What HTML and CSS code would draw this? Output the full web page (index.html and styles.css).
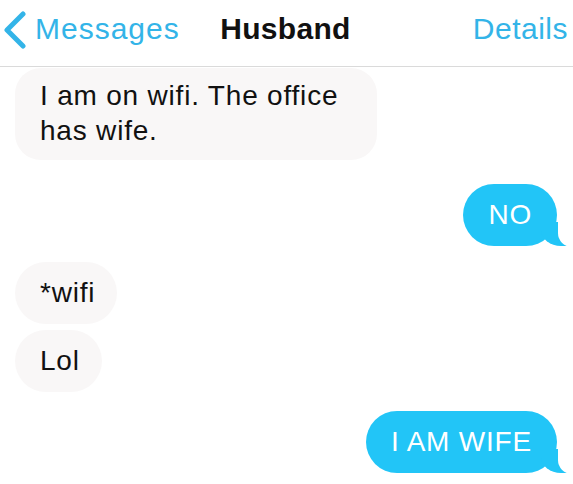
FILE: index.html
```html
<!DOCTYPE html>
<html lang="en">
<head>
  <meta charset="UTF-8" />
  <meta name="viewport" content="width=device-width, initial-scale=1.0"/>
  <title>Husband</title>
  <link rel="stylesheet" href="styles.css">
</head>
<body>
  <header class="nav">
    <a class="nav-back" href="#">
      <svg class="chevron" width="24" height="38" viewBox="0 0 24 38"><path d="M20 3 L4 19 L20 35"/></svg>
      <span>Messages</span>
    </a>
    <h1 class="nav-title">Husband</h1>
    <a class="nav-details" href="#">Details</a>
  </header>

  <main class="thread">
    <div class="bubble received long">I am on wifi. The office has wife.</div>
    <div class="bubble sent gap-big">NO</div>
    <div class="bubble received gap-mid">*wifi</div>
    <div class="bubble received gap-small">Lol</div>
    <div class="bubble sent gap-last">I AM WIFE</div>
  </main>
</body>
</html>
```

FILE: styles.css
```css
body { margin: 0; background: #fff; font-family: "Liberation Sans", Arial, sans-serif; color: #111; }

.nav { display: grid; grid-template-columns: 1fr auto 1fr; align-items: center; height: 66px; padding: 0 5px 0 3px; border-bottom: 1px solid #dadada; box-sizing: content-box; }
.nav a { color: #33b4e8; text-decoration: none; font-size: 30px; letter-spacing: 1px; }
.nav-back { display: flex; align-items: center; gap: 8px; justify-self: start; margin-top: -9px; }
.chevron { fill: none; stroke: #33b4e8; stroke-width: 5; stroke-linecap: round; stroke-linejoin: round; margin-top: 2px; }
.nav-title { margin: -9px 0 0; font-size: 30px; font-weight: bold; letter-spacing: 0.3px; color: #111; }
.nav-details { justify-self: end; margin-top: -9px; letter-spacing: 0.5px !important; }

.thread { display: flex; flex-direction: column; padding: 1px 16px 0 15px; }

.bubble { position: relative; font-size: 28px; letter-spacing: 0.8px; line-height: 35px; padding: 13px 22px 14px 25px; border-radius: 31px; }
.received { align-self: flex-start; background: #f9f7f7; }
.long { width: 362px; box-sizing: border-box; padding: 10px 30px 12px 25px; border-radius: 26px; }
.sent { align-self: flex-end; background: #22c5f7; color: #fff; padding: 13px 25px 14px 25px; }

.sent::before { content: ""; position: absolute; bottom: 0; right: -10px; width: 26px; height: 24px; background: #22c5f7; border-bottom-left-radius: 20px 16px; }
.sent::after { content: ""; position: absolute; bottom: -1px; right: -18px; width: 17px; height: 26px; background: #fff; border-bottom-left-radius: 14px; }

.gap-big { margin-top: 24px; }
.gap-mid { margin-top: 16px; }
.gap-small { margin-top: 6px; }
.gap-last { margin-top: 19px; }
```
